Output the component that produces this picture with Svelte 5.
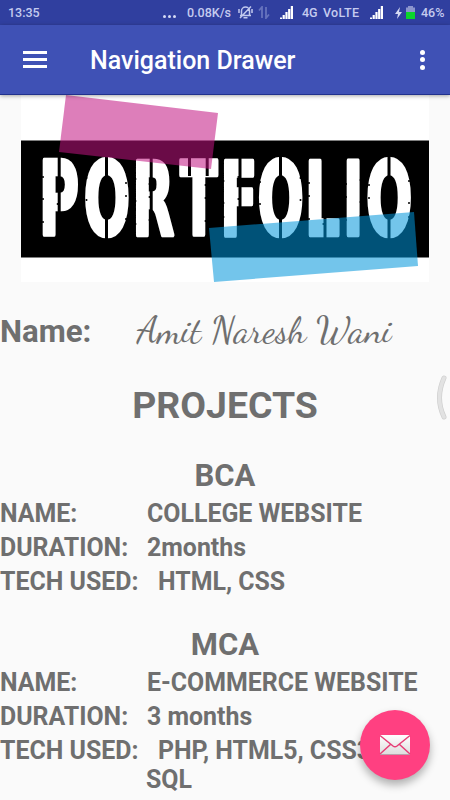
<script lang="ts">
    const projects = [
        {
            title: 'BCA',
            name: 'COLLEGE WEBSITE',
            duration: '2months',
            tech: ['HTML, CSS'],
        },
        {
            title: 'MCA',
            name: 'E-COMMERCE WEBSITE',
            duration: '3 months',
            tech: ['PHP, HTML5, CSS3,', 'SQL'],
        },
    ];

    // vertical stencil breaks: x, top, bottom
    const cuts = [
        [59.2, 156, 240], [106.5, 156, 240], [151.2, 156, 240],
        [189.5, 156, 176], [207.2, 156, 176], [240, 156, 240], [280.5, 156, 240],
        [325, 156, 240], [389, 156, 240],
    ];
    // edges of the stems that get worn-out nicks
    const edges = [43, 57.6, 86.5, 126, 135.5, 149.5, 191, 205.5, 223.5, 238.4, 260, 300.5, 309, 323.4, 346, 360.5, 369, 409];
    const nicks = edges.flatMap((x, i) => [181, 200, 220].map((y, j) => ({ x, y: y + ((i * 5 + j * 3) % 9) - 4 })));
</script>

<div class="screen">
    <div class="status">
        <span class="time">13:35</span>
        <span class="dots"><i></i><i></i><i></i></span>
        <span class="speed">0.08K/s</span>
        <svg class="bell" width="15" height="15" viewBox="0 0 15 15" fill="none" stroke="#c2c9ee" stroke-width="1.5">
            <path d="M2 10.500h11M3.500 10V6a4 4 0 0 1 8 0v4M5.500 12.800h4M13 1.500 2 13M1 4v4M14 4v4" />
        </svg>
        <svg class="data" width="12" height="13" viewBox="0 0 12 13" fill="none" stroke="#6673bd" stroke-width="1.8">
            <path d="M4 12V1L1 4.500M8 1v11l3-3.500" />
        </svg>
        <svg class="signal s1" width="13" height="13" viewBox="0 0 13 13" fill="#fff">
            <path d="M0 11.500h2V13H0zM2.600 9H4.800v4H2.600zM5.400 6h2.200v7H5.400zM8.100 3h2.200v10H8.100zM10.800 0H13v13h-2.200z" />
        </svg>
        <span class="net">4G</span>
        <span class="volte">VoLTE</span>
        <svg class="signal s2" width="13" height="13" viewBox="0 0 13 13" fill="#fff">
            <path d="M0 11.500h2V13H0zM2.600 9H4.800v4H2.600zM5.400 6h2.200v7H5.400zM8.100 3h2.200v10H8.100zM10.800 0H13v13h-2.200z" />
        </svg>
        <svg class="bolt" width="7" height="12" viewBox="0 0 7 12" fill="#d5d9f3"><path d="M5 0 0 7h3l-1 5 5-7H4z" /></svg>
        <svg class="battery" width="9" height="13" viewBox="0 0 9 13">
            <path d="M2 0h5v1.5h2V13H0V1.5h2z" fill="#8c95cd" />
            <path d="M0 6h9v7H0z" fill="#0bd52c" />
        </svg>
        <span class="percent">46%</span>
    </div>

    <header>
        <button class="menu" aria-label="Open menu"><i></i><i></i><i></i></button>
        <h1>Navigation Drawer</h1>
        <button class="more" aria-label="More options"><i></i><i></i><i></i></button>
    </header>

    <main>
        <svg class="banner" width="408" height="187" viewBox="21 95 408 187">
            <rect x="21" y="95" width="408" height="187" fill="#fff" />
            <rect x="21" y="140.5" width="408" height="117" />
            <text class="stencil" y="235.5" transform="scale(0.54 1)" x="72 155 245 334 408 477 565 635 678">PORTFOLIO</text>
            {#each cuts as [x, top, bottom]}
                <line x1={x} x2={x} y1={top} y2={bottom} stroke="#000" stroke-width="3" />
            {/each}
            {#each nicks as n}
                <circle cx={n.x} cy={n.y} r="1" />
            {/each}
            <polygon points="66,95 218,113 211,169 59,152" fill="rgb(193,20,130)" fill-opacity="0.55" />
            <polygon points="209,228 414,212 418,266 214,282" fill="rgb(0,149,218)" fill-opacity="0.55" />
        </svg>

        <div class="owner">
            <span class="owner-label">Name:</span>
            <span class="signature">Amit Naresh Wani</span>
        </div>

        <h2>PROJECTS</h2>

        {#each projects as p}
            <section>
                <h3>{p.title}</h3>
                <div class="row"><span class="label">NAME:</span><span>{p.name}</span></div>
                <div class="row"><span class="label">DURATION:</span><span>{p.duration}</span></div>
                <div class="row"><span class="label wide">TECH USED:</span><span>{p.tech[0]}</span></div>
                {#each p.tech.slice(1) as line}
                    <div class="row extra">{line}</div>
                {/each}
            </section>
        {/each}
    </main>

    <svg class="handle" width="12" height="48" viewBox="0 0 12 48" fill="none">
        <path d="M8 4Q-1 24 8 43" stroke="#cfcfcf" stroke-width="5" stroke-linecap="round" />
        <path d="M8 4Q-1 24 8 43" stroke="#e2e2e2" stroke-width="3.6" stroke-linecap="round" />
    </svg>

    <button class="fab" aria-label="Send mail">
        <svg width="32" height="22" viewBox="0 0 32 22">
            <defs>
                <linearGradient id="paper" x1="0" y1="0" x2="0" y2="1">
                    <stop offset="0" stop-color="#fff" />
                    <stop offset="1" stop-color="#dcdcdc" />
                </linearGradient>
            </defs>
            <rect x="1" y="1" width="30" height="20" fill="url(#paper)" />
            <path d="M1 20.5h30" stroke="#b7a0aa" />
            <path d="M1 1.5 14 12q2 1.5 4 0L31 1.5M1 20l11-10M31 20 20 10" fill="none" stroke="#e63e76" stroke-width="1.5" />
        </svg>
    </button>
</div>

<style>
    :global(body) { margin: 0; }
    .screen { position: relative; width: 450px; height: 800px; overflow: hidden; background: #fafafa; color: #6f6f6f; font-family: Roboto, sans-serif; }
    .status { display: flex; align-items: center; height: 25px; background: #303f9f; color: #c5cbef; font-size: 12.5px; font-weight: 500; box-sizing: border-box; padding-left: 8px; white-space: nowrap; }
    .status > * { flex: none; }
    .time { width: 155px; }
    .dots { display: flex; gap: 2px; width: 24px; padding-top: 7px; }
    .dots i { width: 3px; height: 3px; border-radius: 50%; background: #d5daf5; }
    .speed { width: 51px; }
    .data { margin-left: 5px; }
    .s1 { margin-left: 10px; }
    .net { margin-left: 9px; width: 21px; }
    .volte { width: 47px; letter-spacing: 0.3px; }
    .bolt { margin-left: 12px; }
    .battery { margin-left: 4px; }
    .percent { margin-left: 6px; }
    header { position: relative; display: flex; align-items: center; height: 70px; background: #3f51b5; color: #fff; box-shadow: 0 1px 4px rgba(0, 0, 0, 0.35); border-bottom: 1px solid #21318d; box-sizing: border-box; }
    button { padding: 0; border: 0; background: none; }
    .menu { display: flex; flex-direction: column; gap: 4px; width: 24px; margin-left: 23px; }
    .menu i { height: 3px; background: #fff; }
    h1 { flex: 1; margin: 2px 0 0 43px; font-size: 25px; font-weight: 500; }
    .more { display: flex; flex-direction: column; gap: 2.5px; margin-right: 25px; }
    .more i { width: 5px; height: 5px; border-radius: 50%; background: #fff; }
    main { display: flex; flex-direction: column; }
    .banner { margin-left: 21px; }
    .stencil { font-family: 'DejaVu Sans', sans-serif; font-weight: 700; font-size: 101px; fill: #fff; stroke: #fff; stroke-width: 3.8px; stroke-linejoin: round; vector-effect: non-scaling-stroke; }
    .owner { display: flex; align-items: center; height: 99px; font-size: 31.2px; font-weight: 700; }
    .owner-label { width: 137px; }
    .signature { padding-bottom: 3px; font-family: 'Dancing Script', 'Liberation Serif', serif; font-weight: 400; font-size: 37.4px; white-space: nowrap; }
    h2 { margin: 0; height: 48px; line-height: 48px; text-align: center; font-size: 37.4px; font-weight: 700; }
    section { margin-bottom: -1px; padding-top: 27px; font-size: 24.9px; font-weight: 700; }
    h3 { margin: 0; height: 41px; line-height: 40px; text-align: center; font-size: 31px; }
    .row { display: flex; height: 34px; line-height: 34px; white-space: nowrap; }
    .label { width: 147px; }
    .label.wide { width: 158px; }
    .extra { padding-left: 146px; height: 28px; line-height: 24px; }
    .handle { position: absolute; left: 436px; top: 374px; }
    .fab { position: absolute; left: 360px; top: 710px; display: flex; align-items: center; justify-content: center; width: 70px; height: 70px; border-radius: 50%; background: #ff4081; box-shadow: 0 5px 9px rgba(0, 0, 0, 0.3); }
</style>
